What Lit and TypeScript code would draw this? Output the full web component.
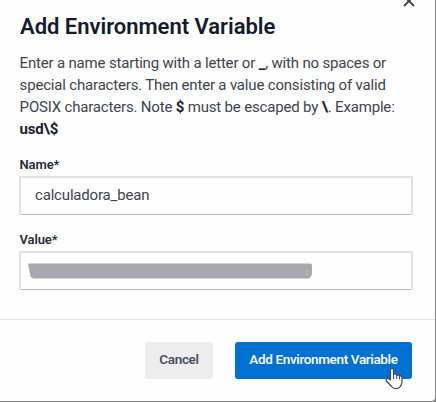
import { LitElement, html, css } from "lit";
import { customElement } from "lit/decorators.js";

@customElement("app-root")
export class AppRoot extends LitElement {
  static styles = css`
    :host {
      display: block;
      width: 436px;
      height: 402px;
      overflow: hidden;
      background: #858586;
      font-family: Roboto, "Liberation Sans", sans-serif;
      color: #3f4450;
    }
    * { box-sizing: border-box; }
    .dialog {
      position: relative;
      display: flex;
      flex-direction: column;
      width: 435px;
      height: 401px;
      background: #fefefe;
      border-bottom-right-radius: 4px;
    }
    .body {
      display: flex;
      flex-direction: column;
      height: 319px;
      padding: 12px 22px 0 19px;
    }
    .close {
      position: absolute;
      left: 402px;
      top: -6px;
      width: 14px;
      height: 14px;
    }
    h1 {
      margin: 0 0 0 1px;
      font-size: 22px;
      line-height: 30px;
      font-weight: 600;
      letter-spacing: -0.02px;
      color: #131b2c;
      white-space: nowrap;
    }
    p {
      margin: 10px 0 0 0.6px;
      font-size: 15px;
      line-height: 22px;
      letter-spacing: -0.18px;
      white-space: nowrap;
    }
    p b { color: #20242e; font-weight: 700; }
    label {
      padding-left: 0.5px;
      font-size: 13px;
      line-height: 16px;
      font-weight: 600;
      letter-spacing: -0.1px;
      color: #262b38;
    }
    .name { margin-top: 17px; }
    .value { margin-top: 17px; }
    .field {
      display: flex;
      align-items: center;
      height: 39px;
      margin-top: 3px;
      width: 394px;
      border: 2px solid #e2e2e3;
      border-bottom: 1px solid #b9b9bb;
      border-radius: 2px;
      padding: 0 0 2px 14px;
      font-size: 15px;
      letter-spacing: -0.18px;
    }
    .field.masked { padding: 0 0 1px 7px; }
    .footer {
      display: flex;
      justify-content: flex-end;
      gap: 22px;
      height: 82px;
      padding: 22px 23px 0 0;
      border-top: 1px solid #e5e5e8;
    }
    button {
      height: 37px;
      border: 0;
      border-radius: 3px;
      padding: 0 0 4px;
      font: 600 13.5px Roboto, "Liberation Sans", sans-serif;
      letter-spacing: -0.36px;
      white-space: nowrap;
    }
    .cancel { width: 68px; background: #ededef; color: #4a4f5b; }
    .primary { width: 177px; background: #0070d2; color: #f4f9ff; }
    .cursor {
      position: absolute;
      left: 383px;
      top: 366px;
      width: 22px;
      height: 25px;
    }
  `;

  render() {
    return html`
      <div class="dialog">
        <div class="body">
          <h1>Add Environment Variable</h1>
          <p>
            Enter a name starting with a letter or <b>_</b>, with no spaces or<br />
            special characters. Then enter a value consisting of valid<br />
            POSIX characters. Note <b>$</b> must be escaped by <b>\\</b>. Example:<br />
            <b>usd\\$</b>
          </p>
          <label class="name">Name*</label>
          <div class="field"><span>calculadora_bean</span></div>
          <label class="value">Value*</label>
          <div class="field masked">
            <svg width="285" height="16" viewBox="0 0 285 16">
              <path d="M0 1Q0 .5 1 .5H282Q284 .5 284 2V10.500Q283 15 280 15.500H6Q3 15 2.500 13Z" fill="#a7a8ac" />
              <path d="M277 8h4M277 11h3" stroke="#bdbec2" fill="none" />
            </svg>
          </div>
        </div>
        <div class="footer">
          <button class="cancel">Cancel</button>
          <button class="primary">Add Environment Variable</button>
        </div>
        <svg class="close" viewBox="0 0 14 14">
          <path d="M2 2L12 12M12 2L2 12" stroke="#454547" stroke-width="1.9" fill="none" />
        </svg>
        <svg class="cursor" viewBox="0 0 22 25">
          <path d="M7.500 14V4Q7.500 2.500 9 2.500Q10.500 2.500 10.500 4V9Q11 7.700 12.500 8Q13.500 8.200 13.700 9.500Q15.300 8 16.500 10.200Q18.500 9.300 19 11.500V16Q19 18.500 17 20.800Q15.500 22.700 13 22.700Q10 22.700 8.500 20.500L3.500 15Q2.500 13.300 3.700 12.500Q5 12 7.500 14Z" fill="#fff" stroke="#44454d" stroke-width="1.200" stroke-linejoin="round" />
          <path d="M10.500 9V13M13.700 9.500V13M16.500 10.500V13.500" stroke="#44454d" stroke-width="1" fill="none" />
        </svg>
      </div>
    `;
  }
}
